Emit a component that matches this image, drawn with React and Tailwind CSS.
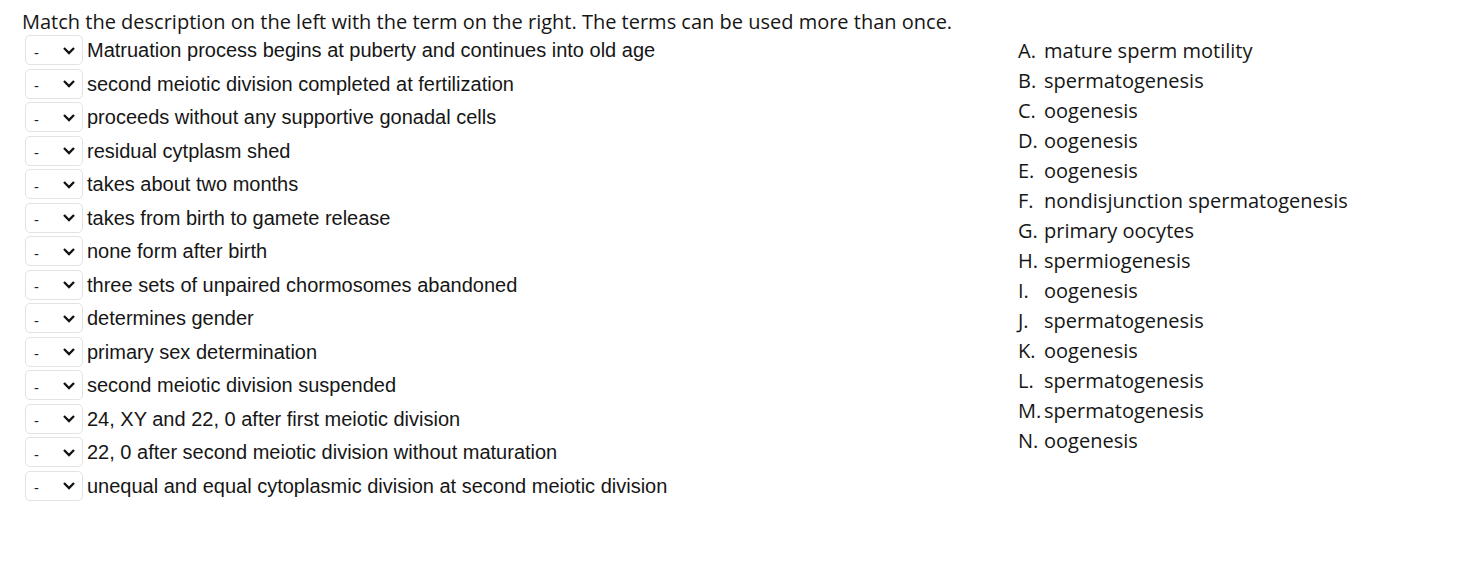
import React from 'react';

const descriptions = [
  'Matruation process begins at puberty and continues into old age',
  'second meiotic division completed at fertilization',
  'proceeds without any supportive gonadal cells',
  'residual cytplasm shed',
  'takes about two months',
  'takes from birth to gamete release',
  'none form after birth',
  'three sets of unpaired chormosomes abandoned',
  'determines gender',
  'primary sex determination',
  'second meiotic division suspended',
  '24, XY and 22, 0 after first meiotic division',
  '22, 0 after second meiotic division without maturation',
  'unequal and equal cytoplasmic division at second meiotic division',
];

const terms = [
  ['A.', 'mature sperm motility'],
  ['B.', 'spermatogenesis'],
  ['C.', 'oogenesis'],
  ['D.', 'oogenesis'],
  ['E.', 'oogenesis'],
  ['F.', 'nondisjunction spermatogenesis'],
  ['G.', 'primary oocytes'],
  ['H.', 'spermiogenesis'],
  ['I.', 'oogenesis'],
  ['J.', 'spermatogenesis'],
  ['K.', 'oogenesis'],
  ['L.', 'spermatogenesis'],
  ['M.', 'spermatogenesis'],
  ['N.', 'oogenesis'],
];

function Dropdown() {
  return (
    <div className="flex h-[30px] w-[58px] shrink-0 items-center justify-between rounded-[5px] border border-[#e3e3e3] bg-white pl-[8px] pr-[6px]">
      <span className="mt-[4px] text-[15px] leading-none text-[#222]">-</span>
      <svg width="14" height="9" viewBox="0 0 14 9" className="text-[#111]">
        <path d="M2 2 L7 7 L12 2" fill="none" stroke="currentColor" strokeWidth="2.3" />
      </svg>
    </div>
  );
}

export default function App() {
  return (
    <div className="min-h-screen bg-white pl-[22px] pt-[9px] text-[#161616]">
      <p className="font-['Open_Sans',sans-serif] text-[20px] leading-[26px]">
        Match the description on the left with the term on the right. The terms can be used more than once.
      </p>
      <div className="flex">
        <div className="flex w-[996px] shrink-0 flex-col gap-[3.5px] pl-[3px]">
          {descriptions.map((d, i) => (
            <div key={i} className="flex items-center gap-[4px]">
              <Dropdown />
              <span className="font-['Liberation_Sans',Arial,sans-serif] text-[20px] leading-[24px]">{d}</span>
            </div>
          ))}
        </div>
        <ul className="mt-[1px] font-['Open_Sans',sans-serif] text-[20px] leading-[30px]">
          {terms.map(([k, v]) => (
            <li key={k} className="flex">
              <span className="w-[26px] shrink-0">{k}</span>
              <span>{v}</span>
            </li>
          ))}
        </ul>
      </div>
    </div>
  );
}
